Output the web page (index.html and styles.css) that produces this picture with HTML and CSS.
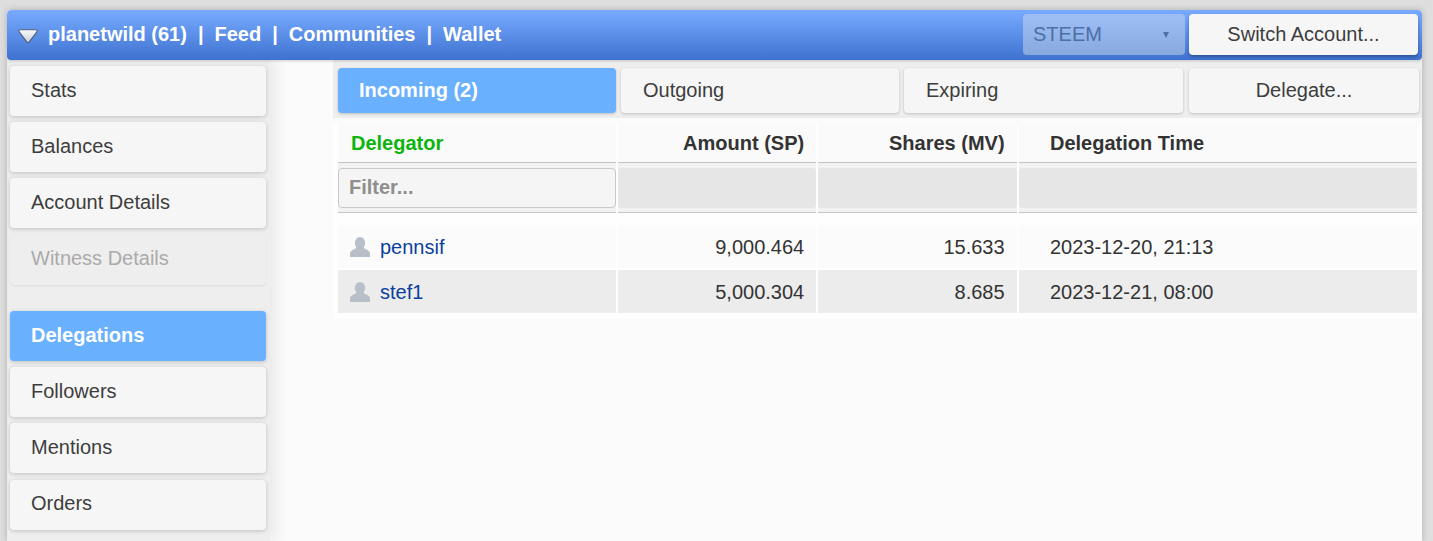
FILE: index.html
```html
<!DOCTYPE html>
<html lang="en">
<head>
<meta charset="utf-8">
<title>Delegations</title>
<link rel="stylesheet" href="styles.css">
</head>
<body>
<div class="panel">
  <header class="topbar">
    <div class="crumbs">
      <svg class="caret" width="20" height="15" viewBox="0 0 20 15"><defs><linearGradient id="cg" x1="0" y1="0" x2="0" y2="1"><stop offset="0" stop-color="#fbfbfb"/><stop offset="1" stop-color="#c9ced8"/></linearGradient></defs><path d="M2.6 .8 H17.4 Q20 .8 18.8 2.8 L11.2 12.8 Q10 14.4 8.8 12.8 L1.2 2.8 Q0 .8 2.6 .8 Z" fill="url(#cg)" stroke="#55637c" stroke-width="1.1" stroke-linejoin="round"/></svg>
      <span>planetwild (61)</span><span class="sep">|</span><span>Feed</span><span class="sep">|</span><span>Communities</span><span class="sep">|</span><span>Wallet</span>
    </div>
    <div class="select"><span>STEEM</span><i class="arrow"></i></div>
    <button class="switch">Switch Account...</button>
  </header>
  <div class="body">
    <nav class="sidebar">
      <a class="nav">Stats</a>
      <a class="nav">Balances</a>
      <a class="nav">Account Details</a>
      <a class="nav disabled">Witness Details</a>
      <a class="nav active spaced">Delegations</a>
      <a class="nav">Followers</a>
      <a class="nav">Mentions</a>
      <a class="nav last">Orders</a>
    </nav>
    <main class="main">
      <div class="tabs">
        <a class="tab active">Incoming (2)</a>
        <a class="tab">Outgoing</a>
        <a class="tab tab-wide">Expiring</a>
        <a class="tab tab-action">Delegate...</a>
      </div>
      <section class="table">
        <div class="row head">
          <div class="cell sorted">Delegator</div>
          <div class="cell num">Amount (SP)</div>
          <div class="cell num">Shares (MV)</div>
          <div class="cell time">Delegation Time</div>
        </div>
        <div class="row filters">
          <div class="fcell"><div class="filter">Filter...</div></div>
          <div class="fcell"><div class="blank"></div></div>
          <div class="fcell"><div class="blank"></div></div>
          <div class="fcell"><div class="blank"></div></div>
        </div>
        <div class="row data first">
          <div class="cell user"><svg class="avatar" width="20" height="20" viewBox="0 0 20 20"><ellipse cx="10" cy="6" rx="5.2" ry="6" fill="#b7bfc8"/><path d="M0 20 V16.5 Q0 13.5 5 12 L7 10 H13 L15 12 Q20 13.5 20 16.5 V20 Z" fill="#b7bfc8"/></svg><a class="link">pennsif</a></div>
          <div class="cell num">9,000.464</div>
          <div class="cell num">15.633</div>
          <div class="cell time">2023-12-20, 21:13</div>
        </div>
        <div class="row data alt">
          <div class="cell user"><svg class="avatar" width="20" height="20" viewBox="0 0 20 20"><ellipse cx="10" cy="6" rx="5.2" ry="6" fill="#b7bfc8"/><path d="M0 20 V16.5 Q0 13.5 5 12 L7 10 H13 L15 12 Q20 13.5 20 16.5 V20 Z" fill="#b7bfc8"/></svg><a class="link">stef1</a></div>
          <div class="cell num">5,000.304</div>
          <div class="cell num">8.685</div>
          <div class="cell time">2023-12-21, 08:00</div>
        </div>
      </section>
    </main>
  </div>
</div>
</body>
</html>
```
FILE: styles.css
```css
* { box-sizing: border-box; }
html, body { margin: 0; height: 541px; overflow: hidden; }
body {
  background: #dedede;
  font-family: "Liberation Sans", Arial, sans-serif;
  font-size: 20px;
  color: #333;
  padding: 10px 11px 0 7px;
}
.panel {
  height: 531px;
  background: #fbfbfb;
  border-radius: 4px 4px 0 0;
  box-shadow: 0 0 6px rgba(0,0,0,.22);
  overflow: hidden;
  display: flex;
  flex-direction: column;
}
.topbar {
  height: 50px;
  flex: none;
  display: flex;
  align-items: flex-start;
  padding: 4px 4px 0 11px;
  border-radius: 4px;
  background: linear-gradient(#78abff, #3f72d0);
  box-shadow: 0 1px 3px rgba(0,0,0,.18);
  position: relative;
  z-index: 2;
}
.crumbs {
  flex: 1;
  display: flex;
  align-items: center;
  height: 40px;
  font-weight: bold;
  color: #fff;
}
.caret { margin: 4px 10px 0 0; }
.sep { margin: 0 11px; }
.select {
  width: 162px;
  height: 41px;
  margin-right: 4px;
  border-radius: 4px;
  background: linear-gradient(#9dbff5, #87a9de);
  color: #4d6fa8;
  display: flex;
  align-items: center;
  justify-content: space-between;
  padding: 0 16px 0 10px;
}
.arrow {
  width: 0; height: 0;
  border-left: 3px solid transparent;
  border-right: 3px solid transparent;
  border-top: 6px solid #4d6fa8;
}
.switch {
  width: 229px;
  height: 41px;
  border: 0;
  border-radius: 4px;
  background: #f6f6f6;
  box-shadow: 0 2px 3px rgba(0,0,0,.28);
  font: inherit;
  color: #3d3d3d;
}
.body { flex: 1; display: flex; min-height: 0; }
.sidebar {
  width: 263px;
  flex: none;
  background: #eee;
  box-shadow: 6px 0 14px rgba(0,0,0,.08);
  padding: 6px 0 0 3px;
  display: flex;
  flex-direction: column;
  gap: 6.2px;
}
.nav {
  width: 256px;
  height: 50px;
  flex: none;
  background: #f6f6f6;
  border-radius: 4px;
  box-shadow: 0 1px 4px rgba(0,0,0,.2);
  padding: 0 21px;
  line-height: 48px;
  color: #3d3d3d;
}
.nav.disabled { background: #eee; color: #aaa; box-shadow: 0 1px 2px rgba(0,0,0,.08); line-height: 47px; }
.nav.last { line-height: 47px; }
.nav.active { background: #69b0ff; color: #fff; font-weight: bold; }
.nav.spaced { margin-top: 20.2px; }
.main { flex: 1; padding-left: 63px; min-width: 0; }
.tabs {
  height: 58px;
  display: flex;
  gap: 5px;
  padding: 8px 3px 0 5px;
  background: #eee;
}
.tab {
  width: 278px;
  height: 45px;
  background: #f6f6f6;
  border-radius: 4px;
  box-shadow: 0 1px 3px rgba(0,0,0,.2);
  padding: 0 22px;
  line-height: 44px;
  color: #3d3d3d;
}
.tab-wide { width: 279px; }
.tab-action { width: 230px; margin-left: 1px; text-align: center; }
.tab.active { background: #69b0ff; color: #fff; font-weight: bold; padding-left: 21px; }
.table {
  margin-top: 7px;
  padding: 0 5px 4px 5px;
  background: #fefefe;
}
.row {
  display: grid;
  grid-template-columns: 278px 198.2px 198.4px 1fr;
  column-gap: 2px;
}
.cell { padding: 0 13px; white-space: nowrap; }
.cell.num { padding-right: 12px; text-align: right; }
.head .cell {
  height: 38px;
  line-height: 36px;
  font-weight: bold;
  color: #333;
  background: #fafafa;
  border-bottom: 1px solid #c4c4c4;
}
.head .sorted { color: #0cb50c; }
.cell.time { padding-left: 31.4px; }
.filters { margin-bottom: 12px; }
.fcell { padding: 5px 0 4px; background: #f2f2f2; border-bottom: 1px solid #c4c4c4; }
.filter {
  height: 40px;
  background: #f5f5f5;
  border: 1px solid #c9c9c9;
  border-radius: 4px;
  padding: 0 10px;
  line-height: 36px;
  font-weight: bold;
  color: #8f8f8f;
}
.blank { height: 40px; background: #e6e6e6; border-radius: 3px; }
.data { margin-bottom: 2px; }
.data .cell { height: 43px; line-height: 44px; background: #fbfbfb; }
.data.alt .cell { background: #ececec; }
.data .cell.user { display: flex; align-items: center; padding-left: 12px; }
.avatar { margin-right: 10px; flex: none; }
.link { color: #0a3f9e; }
```
